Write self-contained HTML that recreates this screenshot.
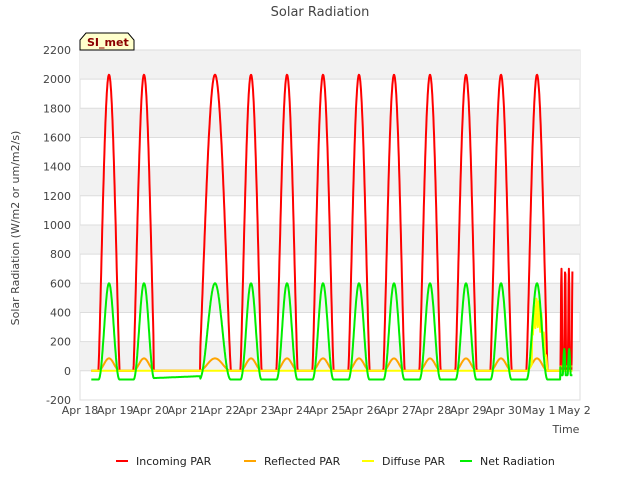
<!DOCTYPE html><html><head><style>body{margin:0;background:#fff}svg{font-family:"DejaVu Sans","Liberation Sans",sans-serif}</style></head><body>
<svg id="s" width="640" height="480" xmlns="http://www.w3.org/2000/svg">
<rect width="640" height="480" fill="#fff"/>
<g id="bands"></g>
<text x="320" y="16" font-size="13" fill="#444" text-anchor="middle">Solar Radiation</text>
<text transform="translate(19,228) rotate(-90)" font-size="11" fill="#444" text-anchor="middle">Solar Radiation (W/m2 or um/m2/s)</text>
<text x="566" y="433" font-size="11" fill="#444" text-anchor="middle">Time</text>
<g id="ticks" font-size="11" fill="#444"></g>
<g id="lines" fill="none" stroke-width="2" stroke-linejoin="round"></g>
<path d="M80,50 L80,40 L86,33 L128,33 L134,40 L134,50 Z" fill="#ffffcc" stroke="#000" stroke-width="1"/>
<text x="87" y="46" font-size="11" font-weight="bold" fill="#8b0000">SI_met</text>
<g font-size="11" fill="#222">
<line x1="116" y1="461" x2="128" y2="461" stroke="#ff0000" stroke-width="2"/><text x="136" y="465">Incoming PAR</text>
<line x1="244" y1="461" x2="256" y2="461" stroke="#ffa500" stroke-width="2"/><text x="264" y="465">Reflected PAR</text>
<line x1="362" y1="461" x2="374" y2="461" stroke="#ffff00" stroke-width="2"/><text x="382" y="465">Diffuse PAR</text>
<line x1="460" y1="461" x2="472" y2="461" stroke="#00ee00" stroke-width="2"/><text x="480" y="465">Net Radiation</text>
</g>
</svg>
<script>
var NS="http://www.w3.org/2000/svg";
function el(p,t,a,txt){var e=document.createElementNS(NS,t);for(var k in a)e.setAttribute(k,a[k]);if(txt!=null)e.textContent=txt;p.appendChild(e);return e}
function Y(v){return 370.8-v*0.14583}
function X(d){return 80+d*35.3}
var b=document.getElementById('bands');
el(b,'rect',{x:80,y:50,width:500,height:350,fill:'#fff',stroke:'#ddd'});
for(var v=0;v<2200;v+=400)el(b,'rect',{x:80,y:Y(v+200),width:500,height:29.17,fill:'#f2f2f2'});
for(var v=-200;v<=2200;v+=200)el(b,'line',{x1:80,x2:580,y1:Y(v),y2:Y(v),stroke:'#ddd'});
var tk=document.getElementById('ticks');
for(var v=-200;v<=2200;v+=200)el(tk,'text',{x:71,y:Y(v)+4,'text-anchor':'end'},v);
var days=['Apr 18','Apr 19','Apr 20','Apr 21','Apr 22','Apr 23','Apr 24','Apr 25','Apr 26','Apr 27','Apr 28','Apr 29','Apr 30','May 1','May 2'];
days.forEach(function(s,i){el(tk,'text',{x:X(i),y:414,'text-anchor':'middle'},s)});
var peaks=[109,144,215,251,287,323,359,394,430,466,501,537];
var R=[],O=[],G=[],Yl=[];
function day(px){return (px-80)/35.3}
var pd=peaks.map(day);
for(var t=0.32;t<=13.95;t+=0.01){
  var r=0,o=0,g=-60,yy=0;
  var gap=(t>2.08&&t<3.4);
  for(var i=0;i<pd.length;i++){
    var w=(i==2)?0.45:0.3;var u=(t-pd[i])/w;
    if(Math.abs(u)<1){var c=Math.cos(u*Math.PI/2);r=Math.max(r,2030*Math.pow(c,1.2));o=Math.max(o,85*c*c);g=Math.max(g,-60+660*Math.pow(c,2.2));}
  }
  if(gap){r=0;o=0;g=-50+ (t-2.08)*10;}
  if(t>12.5){yy=o;}
  if(t>12.8&&t<13.3){var u=(t-pd[11])/0.3;if(Math.abs(u)<1)yy=Math.max(yy,500*Math.cos(u*Math.PI/2)*(0.8+0.2*Math.sin(t*90)));}
  if(t>13.6){r=Math.max(0,Math.sin(t*60))*700;g=Math.max(-30,Math.sin(t*45)*150);o=30;}
  R.push([t,r]);O.push([t,o]);G.push([t,g]);Yl.push([t,yy]);
}
var L=document.getElementById('lines');
function pl(a,c){var s='';a.forEach(function(p){s+=X(p[0]).toFixed(1)+','+Y(p[1]).toFixed(1)+' '});el(L,'polyline',{points:s,stroke:c})}
pl(R,'#ff0000');pl(O,'#ffa500');pl(Yl,'#ffff00');pl(G,'#00ee00');
</script>
</body></html>
